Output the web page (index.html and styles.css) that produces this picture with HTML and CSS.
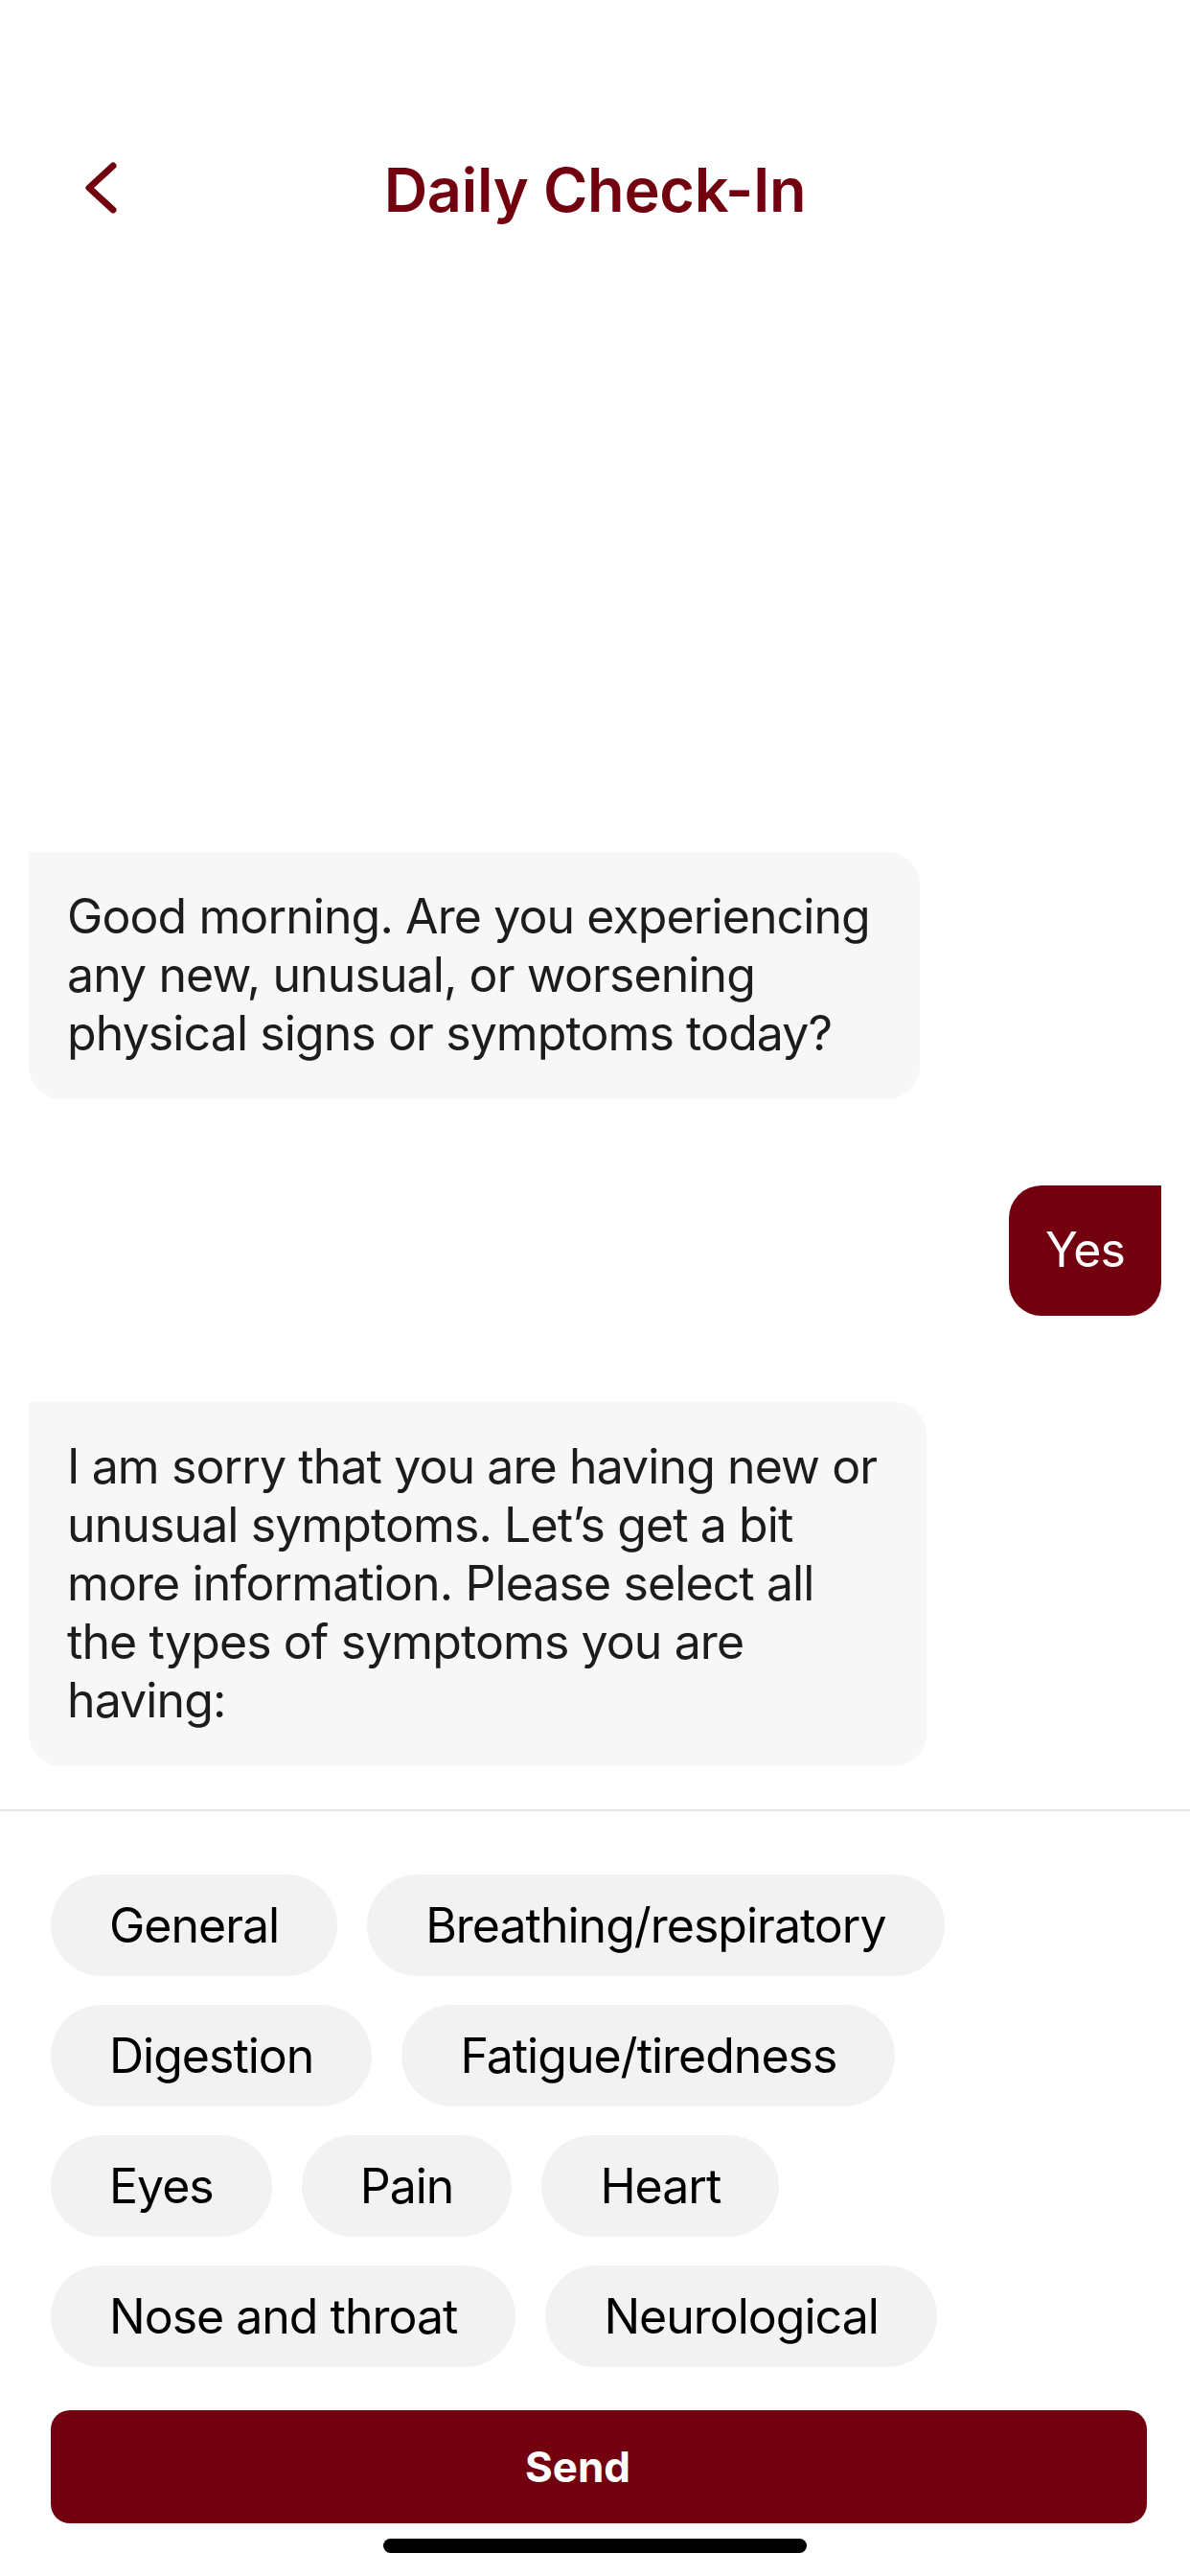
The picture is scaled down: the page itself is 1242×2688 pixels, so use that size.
FILE: index.html
```html
<!DOCTYPE html>
<html lang="en">
<head>
    <meta charset="UTF-8">
    <title>Daily Check-In</title>
    <link rel="stylesheet" href="styles.css">
</head>
<body>
    <header class="topbar">
        <a href="#" class="back">
            <svg width="40" height="62" viewBox="0 0 40 62">
                <path d="M30 6 L5 29 L30 52" fill="none" stroke="#72000e" stroke-width="7" stroke-linecap="round" stroke-linejoin="round"/>
            </svg>
        </a>
        <h1>Daily Check-In</h1>
        <div></div>
    </header>

    <main class="chat">
        <div class="bubble bot">Good morning. Are you experiencing<br>any new, unusual, or worsening<br>physical signs or symptoms today?</div>
        <div class="bubble user">Yes</div>
        <div class="bubble bot">I am sorry that you are having new or<br>unusual symptoms. Let’s get a bit<br>more information. Please select all<br>the types of symptoms you are<br>having:</div>
    </main>

    <section class="panel">
        <div class="chips">
            <button class="chip">General</button>
            <button class="chip">Breathing/respiratory</button>
            <button class="chip">Digestion</button>
            <button class="chip">Fatigue/tiredness</button>
            <button class="chip">Eyes</button>
            <button class="chip">Pain</button>
            <button class="chip">Heart</button>
            <button class="chip">Nose and throat</button>
            <button class="chip">Neurological</button>
        </div>
        <button class="send">Send</button>
        <div class="home-bar"></div>
    </section>
</body>
</html>
```

FILE: styles.css
```css
body {
    font-family: Inter, "Noto Sans", sans-serif;
    margin: 0;
    padding: 0;
    background-color: #fff;
    width: 1242px;
    height: 2688px;
    display: flex;
    flex-direction: column;
}

.topbar {
    display: grid;
    grid-template-columns: 1fr auto 1fr;
    align-items: center;
    height: 120px;
    margin-top: 138px;
}

.back {
    display: flex;
    padding-left: 88px;
}

.topbar h1 {
    margin: 0;
    font-size: 63px;
    font-weight: 600;
    letter-spacing: -0.3px;
    color: #72000e;
}

.chat {
    flex: 1;
    display: flex;
    flex-direction: column;
    justify-content: flex-end;
    gap: 90px;
    padding: 0 30px 45px;
}

.bubble {
    font-size: 50px;
    line-height: 61px;
    letter-spacing: -0.9px;
    border-radius: 34px;
    width: fit-content;
}

.bubble.bot {
    background-color: #f7f7f7;
    color: #1c1c1e;
    padding: 37px 52px 38px 40px;
    border-top-left-radius: 0;
}

.bubble.user {
    align-self: flex-end;
    background-color: #72000e;
    color: #fff;
    padding: 37px 38px 38px;
    border-top-right-radius: 0;
}

.panel {
    border-top: 2px solid #e4e4e4;
    padding: 66px 45px 24px 53px;
    display: flex;
    flex-direction: column;
}

.chips {
    display: flex;
    flex-wrap: wrap;
    gap: 30px 31px;
    padding-right: 90px;
}

.chip {
    font-family: inherit;
    font-size: 50px;
    letter-spacing: -1px;
    color: #000;
    background-color: #f2f2f2;
    border: none;
    border-radius: 53px;
    height: 106px;
    padding: 0 61px;
}

.send {
    font-family: inherit;
    margin-top: 45px;
    height: 118px;
    padding: 0 44px 0 0;
    background-color: #72000e;
    color: #fff;
    font-size: 44px;
    font-weight: 700;
    border: none;
    border-radius: 20px;
}

.home-bar {
    align-self: center;
    margin: 16px 0 0 -8px;
    width: 442px;
    height: 15px;
    border-radius: 8px;
    background-color: #000;
}
```
